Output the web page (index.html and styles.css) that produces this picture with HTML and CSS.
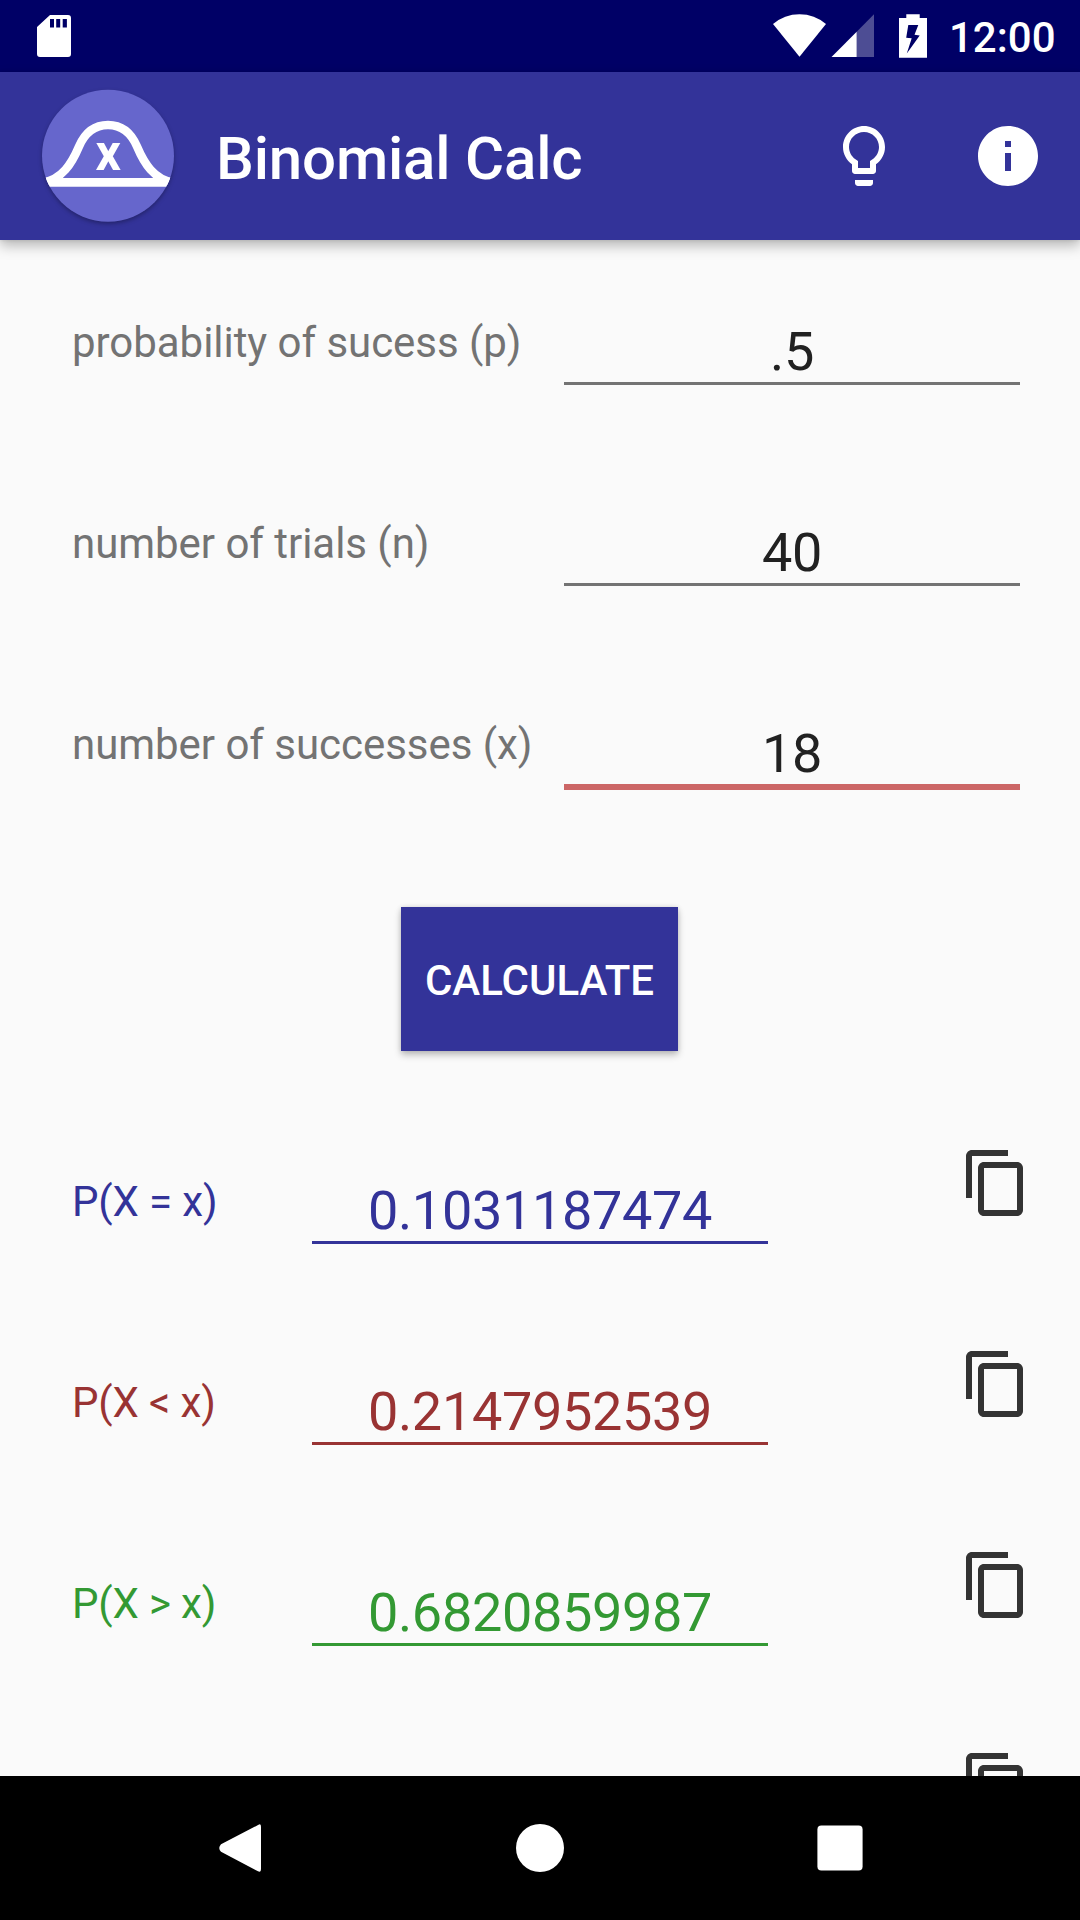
FILE: index.html
```html
<!DOCTYPE html>
<html lang="en">
<head>
<meta charset="utf-8">
<title>Binomial Calc</title>
<link rel="stylesheet" href="styles.css">
</head>
<body>
<div class="screen">
  <header class="status-bar">
    <svg class="sd-icon" width="34" height="72" viewBox="37 0 34 72"><path fill="#fff" fill-rule="evenodd" d="M50 15H68q3 0 3 3V54q0 3-3 3H40q-3 0-3-3V27zM50 19v8.500h4V19zM56.200 19v8.500h4V19zM62.700 19v8.500h4.200V19z"/></svg>
    <div class="status-right">
      <svg width="53" height="72" viewBox="0 0 53 72"><path fill="#fff" d="M0 24Q11.500 14.200 26.500 14.200T53 24L26.500 56.700z"/></svg>
      <svg class="signal" width="43" height="72" viewBox="0 0 43 72"><path fill="#fff" fill-opacity=".3" d="M43 14.300V57H25.700V31.700z"/><path fill="#fff" d="M.5 57H25.700V31.700z"/></svg>
      <svg class="battery" width="28" height="72" viewBox="0 0 28 72"><path fill="#fff" fill-rule="evenodd" d="M7.300 14.200H20.700V18H28V57.800H0V18H7.300zM9.300 25 7.200 37.800 12.700 38.200 7.800 53.500 20.700 35.500 15.500 34.800 19.300 25z"/></svg>
      <span class="clock">12:00</span>
    </div>
  </header>

  <nav class="app-bar">
    <svg class="logo" width="144" height="144" viewBox="0 0 144 144">
      <defs><clipPath id="disc"><circle cx="72" cy="71.700" r="66"/></clipPath></defs>
      <circle class="logo-disc" cx="72" cy="71.700" r="66"/>
      <g clip-path="url(#disc)">
        <path fill="none" stroke="#fff" stroke-width="8.400" d="M6 98.500C26 96 36 79 43 62.500C49 48.500 59 41 72 41C85 41 95 48.500 101 62.500C108 79 118 96 138 98.500"/>
        <path fill="#fff" d="M0 94H144V102.800H0z"/>
      </g>
      <text class="logo-x" x="72.300" y="86.300" text-anchor="middle">x</text>
    </svg>
    <h1 class="title">Binomial Calc</h1>
    <div class="actions">
      <svg width="72" height="72" viewBox="0 0 24 24"><path fill="#fff" d="M9 21c0 .55.45 1 1 1h4c.55 0 1-.45 1-1v-1H9v1zm3-19C8.140 2 5 5.140 5 9c0 2.380 1.190 4.470 3 5.740V17c0 .55.45 1 1 1h6c.55 0 1-.45 1-1v-2.260c1.810-1.270 3-3.360 3-5.740 0-3.860-3.140-7-7-7zm2.850 11.100l-.85.6V16h-4v-2.300l-.85-.6C7.800 12.160 7 10.630 7 9c0-2.760 2.240-5 5-5s5 2.240 5 5c0 1.630-.8 3.160-2.150 4.100z"/></svg>
      <svg width="72" height="72" viewBox="0 0 24 24"><path fill="#fff" d="M12 2C6.480 2 2 6.480 2 12s4.480 10 10 10 10-4.480 10-10S17.520 2 12 2zm1 15h-2v-6h2v6zm0-8h-2V7h2v2z"/></svg>
    </div>
  </nav>

  <main class="content">
    <div class="row">
      <label class="label" for="p">probability of sucess (p)</label>
      <input class="value" id="p" type="text" value=".5">
    </div>
    <div class="row">
      <label class="label" for="n">number of trials (n)</label>
      <input class="value" id="n" type="text" value="40">
    </div>
    <div class="row">
      <label class="label" for="x">number of successes (x)</label>
      <input class="value active" id="x" type="text" value="18">
    </div>

    <div class="button-row"><button class="calculate" type="button">CALCULATE</button></div>

    <div class="row result blue">
      <span class="label">P(X = x)</span>
      <output class="value">0.1031187474</output>
      <svg class="copy" width="72" height="72" viewBox="0 0 24 24"><path d="M16 1H4c-1.100 0-2 .9-2 2v14h2V3h12V1zm3 4H8c-1.100 0-2 .9-2 2v14c0 1.100.9 2 2 2h11c1.100 0 2-.9 2-2V7c0-1.100-.9-2-2-2zm0 16H8V7h11v14z"/></svg>
    </div>
    <div class="row result red">
      <span class="label">P(X &lt; x)</span>
      <output class="value">0.2147952539</output>
      <svg class="copy" width="72" height="72" viewBox="0 0 24 24"><path d="M16 1H4c-1.100 0-2 .9-2 2v14h2V3h12V1zm3 4H8c-1.100 0-2 .9-2 2v14c0 1.100.9 2 2 2h11c1.100 0 2-.9 2-2V7c0-1.100-.9-2-2-2zm0 16H8V7h11v14z"/></svg>
    </div>
    <div class="row result green">
      <span class="label">P(X &gt; x)</span>
      <output class="value">0.6820859987</output>
      <svg class="copy" width="72" height="72" viewBox="0 0 24 24"><path d="M16 1H4c-1.100 0-2 .9-2 2v14h2V3h12V1zm3 4H8c-1.100 0-2 .9-2 2v14c0 1.100.9 2 2 2h11c1.100 0 2-.9 2-2V7c0-1.100-.9-2-2-2zm0 16H8V7h11v14z"/></svg>
    </div>
    <div class="row result">
      <svg class="copy" width="72" height="72" viewBox="0 0 24 24"><path d="M16 1H4c-1.100 0-2 .9-2 2v14h2V3h12V1zm3 4H8c-1.100 0-2 .9-2 2v14c0 1.100.9 2 2 2h11c1.100 0 2-.9 2-2V7c0-1.100-.9-2-2-2zm0 16H8V7h11v14z"/></svg>
    </div>
  </main>

  <footer class="nav-bar">
    <svg width="48" height="48" viewBox="0 0 48 48"><path fill="#fff" d="M42.500 .8Q45 -1 45 3.500V44.500Q45 49 42 47.300L5 27.800Q1.500 24 5 20.200z"/></svg>
    <svg width="48" height="48" viewBox="0 0 48 48"><circle cx="24" cy="24" r="24" fill="#fff"/></svg>
    <svg width="48" height="48" viewBox="0 0 48 48"><rect x="1.400" y="1.400" width="45.200" height="45.200" rx="4" fill="#fff"/></svg>
  </footer>
</div>
</body>
</html>
```
FILE: styles.css
```css
* { box-sizing: border-box; }

body {
  margin: 0;
  font-family: Roboto, sans-serif;
  background: #fafafa;
}

svg { display: block; flex: none; }

.screen {
  width: 1080px;
  height: 1920px;
  overflow: hidden;
  display: flex;
  flex-direction: column;
}

.status-bar {
  flex: none;
  height: 72px;
  padding: 0 0 0 37px;
  display: flex;
  justify-content: space-between;
  background: #000066;
}

.status-right { display: flex; width: 307px; }
.signal { margin-left: 5px; }
.battery { margin-left: 25px; }

.clock {
  margin-left: 22px;
  padding-top: 2px;
  line-height: 71px;
  font-size: 42px;
  font-weight: 500;
  color: #fff;
}

.app-bar {
  flex: none;
  height: 168px;
  padding: 12px 36px;
  display: flex;
  align-items: center;
  background: #333399;
  box-shadow: 0 6px 12px rgba(0, 0, 0, .26), 0 0 4px rgba(0, 0, 0, .12);
  z-index: 1;
}

.logo-disc {
  fill: #6666cc;
  filter: drop-shadow(0 2px 2px rgba(0, 0, 0, .3));
}

.logo-x {
  font-size: 50px;
  font-weight: 700;
  fill: #fff;
}

.title {
  margin: 0 auto 0 36px;
  padding-top: 5px;
  line-height: 71px;
  font-size: 60px;
  font-weight: 500;
  letter-spacing: -.18px;
  color: #fff;
}

.actions { display: flex; gap: 72px; }

.content {
  flex: 1;
  min-height: 0;
  overflow: hidden;
  background: #fafafa;
}

.row {
  height: 201px;
  padding: 0 60px 0 72px;
  display: flex;
  justify-content: space-between;
}

.label {
  padding-top: 78px;
  line-height: 49px;
  font-size: 42px;
  letter-spacing: -.04px;
  color: #737373;
  white-space: nowrap;
}

.value {
  width: 456px;
  height: 64px;
  margin: 81px 0 0;
  padding: 0;
  border: 0;
  border-bottom: 3px solid #737373;
  border-radius: 0;
  background: none;
  font: 54px/61px Roboto, sans-serif;
  letter-spacing: -.33px;
  text-align: center;
  color: #212121;
  outline: none;
}

.value.active {
  height: 67px;
  border-bottom: 6px solid #cc6666;
}

.button-row {
  height: 256px;
  padding: 64px 0 0 401px;
}

.calculate {
  width: 277px;
  height: 144px;
  padding: 3px 0 0;
  border: 0;
  background: #333399;
  box-shadow: 0 4px 7px rgba(0, 0, 0, .24), 0 0 5px rgba(0, 0, 0, .12);
  font: 500 42px/49px Roboto, sans-serif;
  color: #fff;
}

.result {
  display: grid;
  grid-template-columns: 240px 456px 1fr;
  padding-right: 48px;
}

.result .label { letter-spacing: -.15px; }

.copy {
  grid-column: 3;
  justify-self: end;
  margin-top: 48px;
  fill: #333;
}

.blue .label, .blue .value { color: #333399; border-color: #333399; }
.red .label, .red .value { color: #993333; border-color: #993333; }
.green .label, .green .value { color: #339933; border-color: #339933; }

.nav-bar {
  flex: none;
  height: 144px;
  display: flex;
  align-items: center;
  justify-content: center;
  gap: 252px;
  background: #000;
}
```
